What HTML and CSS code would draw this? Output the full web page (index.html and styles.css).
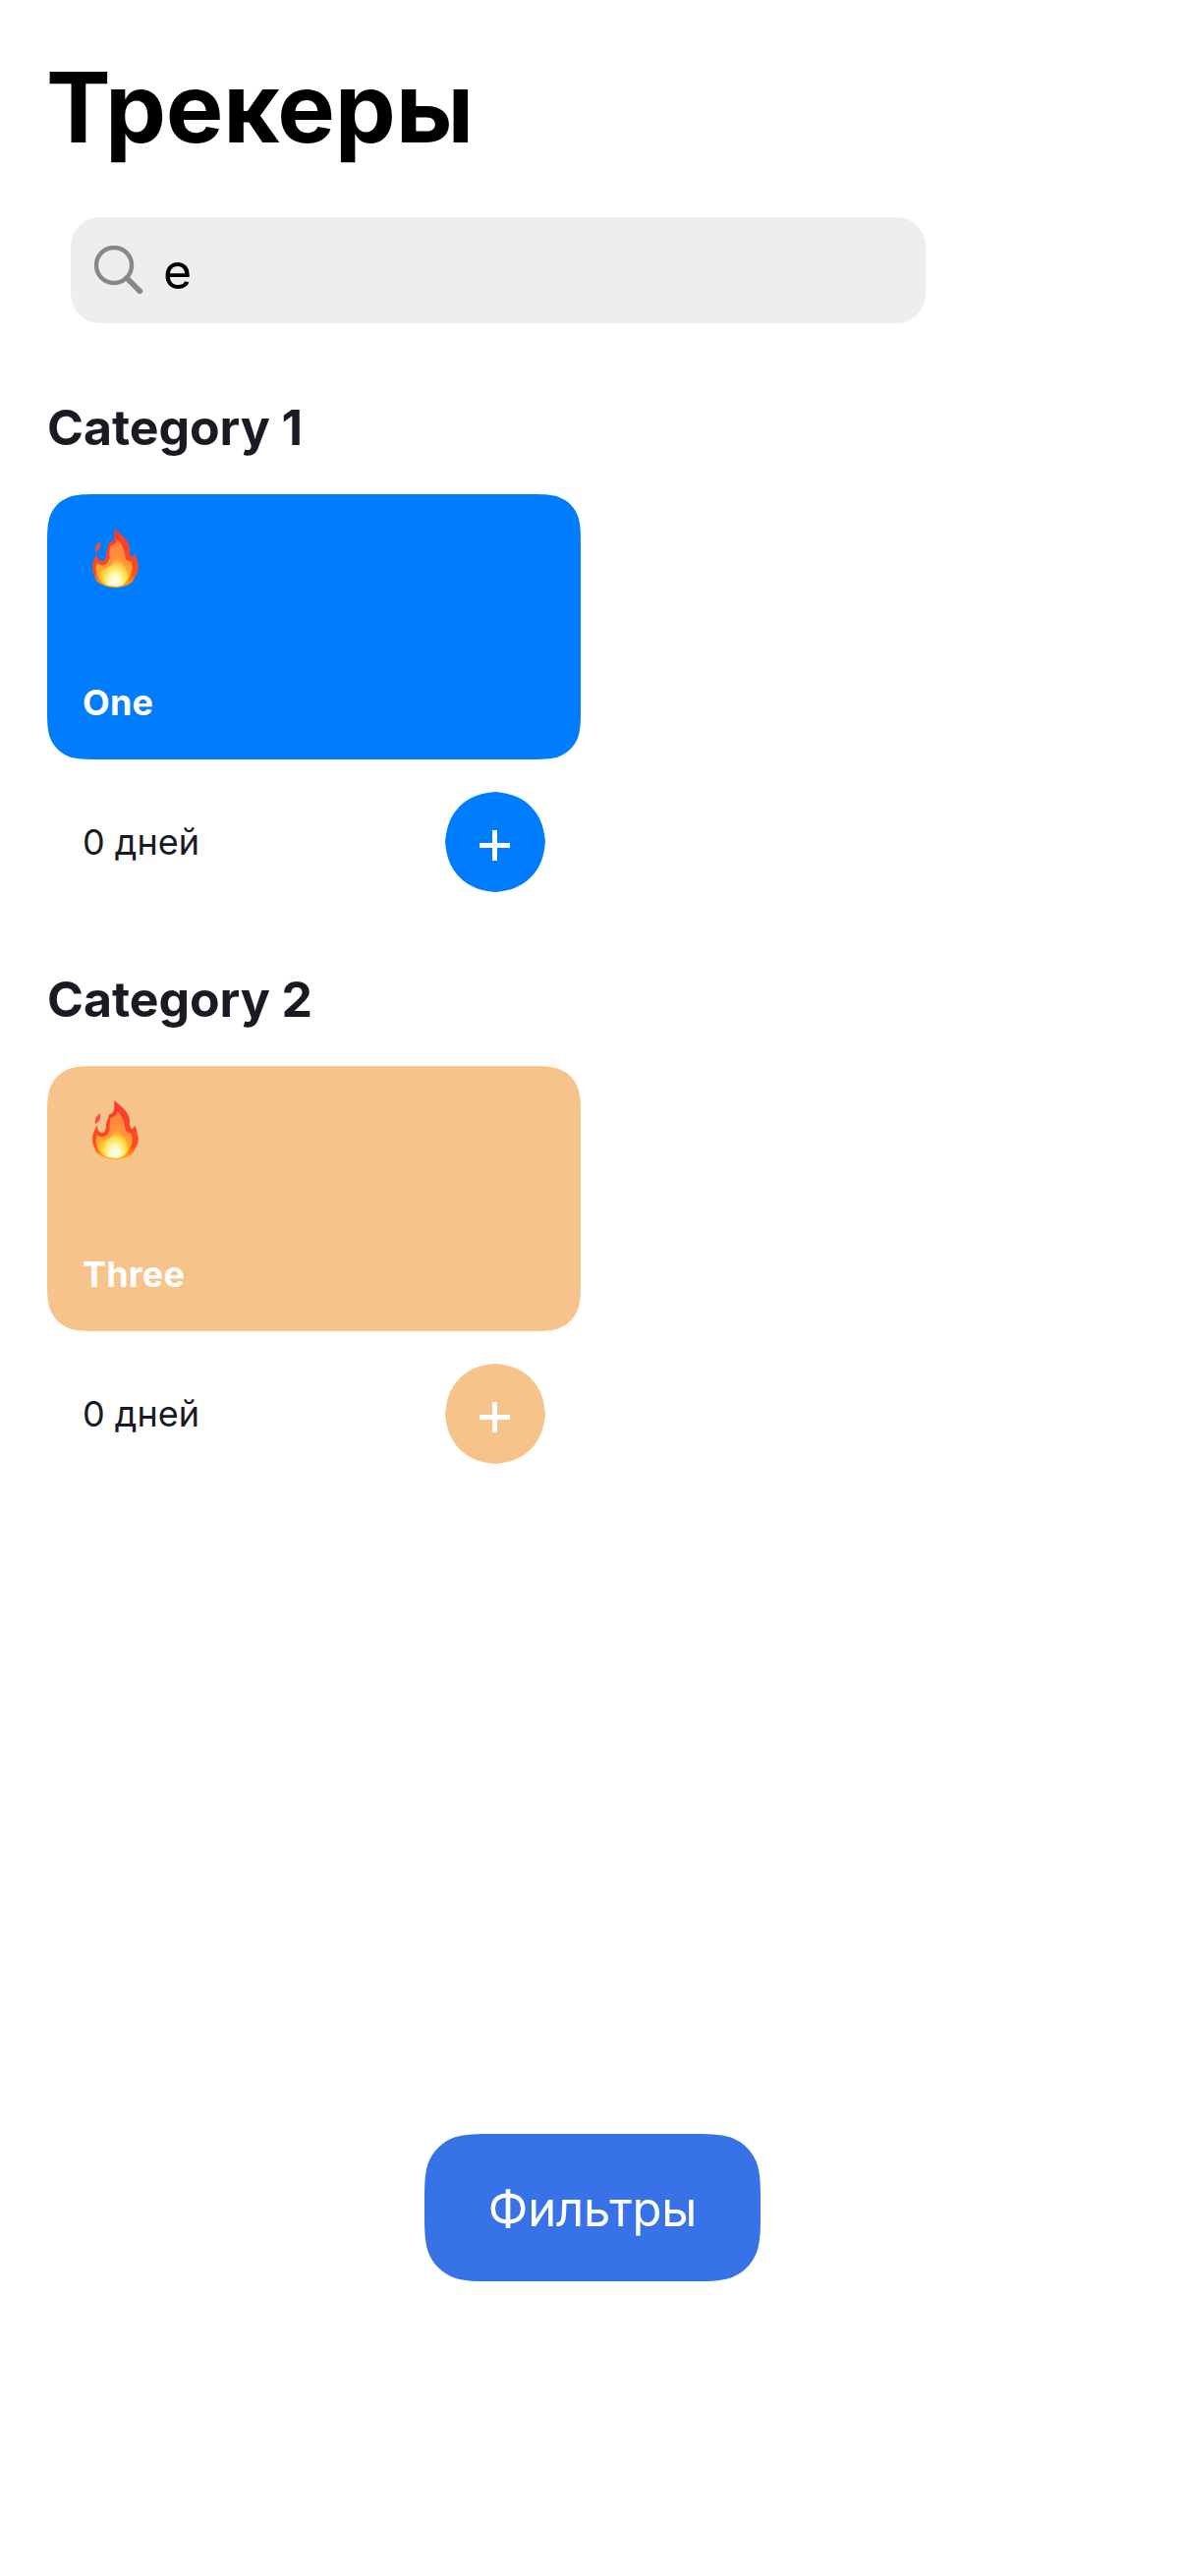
FILE: index.html
```html
<!DOCTYPE html>
<html lang="ru">
<head>
<meta charset="utf-8">
<title>Трекеры</title>
<link rel="stylesheet" href="styles.css">
</head>
<body>
<svg class="defs" width="0" height="0" aria-hidden="true">
  <defs>
    <linearGradient id="flame-outer" x1="0" y1="0" x2="0" y2="1">
      <stop offset="0" stop-color="#f93c2c"/>
      <stop offset=".5" stop-color="#fd4426"/>
      <stop offset=".78" stop-color="#ff4f12"/>
      <stop offset="1" stop-color="#ffb413"/>
    </linearGradient>
    <linearGradient id="flame-mid" x1="0" y1="0" x2="0" y2="1">
      <stop offset="0" stop-color="#ff7f45"/>
      <stop offset=".5" stop-color="#ff9438"/>
      <stop offset="1" stop-color="#ffc81c"/>
    </linearGradient>
    <radialGradient id="flame-core" gradientUnits="userSpaceOnUse" cx="23" cy="54" r="23" gradientTransform="translate(23 54) scale(.85 1.15) translate(-23 -54)">
      <stop offset="0" stop-color="#fffff4"/>
      <stop offset=".28" stop-color="#fffbc0"/>
      <stop offset=".6" stop-color="#ffe34a" stop-opacity=".9"/>
      <stop offset="1" stop-color="#ffb02c" stop-opacity="0"/>
    </radialGradient>
    <symbol id="flame" viewBox="0 0 48 60">
      <path fill="url(#flame-outer)" d="M22 0C27 4 34 9 37 16C39 21 37 25 39 28C41 30 43 28 43 25C45 28 45 32 46 35C48 40 46 46 43 50L41 54C36 58 29 60 23 60C16 60 8 57 4 53L3 50C0 45-1 37 2 31L5 25C5 29 6 32 9 33C13 34 14 29 14 25C15 19 17 17 17 14C22 14 23 9 22 0Z"/>
      <path fill="#ff4b38" d="M8 13C8 19 8 21 3 24C2 19 4 16 8 13Z"/>
      <path fill="url(#flame-mid)" d="M25 11C29 14 32 19 33 26C33 31 36 34 39 33C42 38 41 45 37 51C34 57 29 59 23 59C15 59 9 56 6 50C3 44 3 38 5 35C7 38 13 38 16 34C19 29 16 24 19 17C22 17 25 15 25 11Z"/>
      <path fill="url(#flame-core)" d="M25 27C27 33 31 34 34 40C38 46 37 52 31 57C26 60 18 59 12 56C5 50 6 45 9 41C16 42 21 36 25 27Z"/>
    </symbol>
    <symbol id="plus" viewBox="0 0 31 31">
      <path d="M15.5 0V31M0 15.5H31" stroke="#fff" stroke-width="5" fill="none"/>
    </symbol>
  </defs>
</svg>

<main class="screen">
  <h1 class="title">Трекеры</h1>

  <div class="search">
    <svg class="search-icon" viewBox="0 0 50 50" aria-hidden="true">
      <circle cx="20" cy="20" r="18"/>
      <path d="M33 33L46.3 46.3"/>
    </svg>
    <span class="search-text">e</span>
  </div>

  <section class="category">
    <h2 class="category-title">Category 1</h2>
    <article class="tracker tracker-blue">
      <div class="card">
        <svg class="emoji"><use href="#flame"/></svg>
        <span class="name">One</span>
      </div>
      <div class="footer">
        <span class="days">0 дней</span>
        <button class="add" aria-label="+"><svg class="plus"><use href="#plus"/></svg></button>
      </div>
    </article>
  </section>

  <section class="category">
    <h2 class="category-title">Category 2</h2>
    <article class="tracker tracker-sand">
      <div class="card">
        <svg class="emoji"><use href="#flame"/></svg>
        <span class="name">Three</span>
      </div>
      <div class="footer">
        <span class="days">0 дней</span>
        <button class="add" aria-label="+"><svg class="plus"><use href="#plus"/></svg></button>
      </div>
    </article>
  </section>

  <button class="filters"><span class="filters-label">Фильтры</span></button>
</main>
</body>
</html>
```

FILE: styles.css
```css
* { box-sizing: border-box; }

body {
  margin: 0;
  background: #fff;
  font-family: Inter, "Liberation Sans", sans-serif;
  color: #1a1b22;
}

.defs { position: absolute; }

.screen {
  width: 1206px;
  height: 2622px;
  display: flex;
  flex-direction: column;
  align-items: flex-start;
  padding: 49px 48px 300px;
}

h1, h2 { margin: 0; }

.title {
  height: 120px;
  margin-left: -1px;
  line-height: 121px;
  font-size: 98.5px;
  font-weight: 700;
  letter-spacing: -0.2px;
  color: #000;
}

.search {
  display: flex;
  align-items: center;
  width: 870px;
  height: 108px;
  margin: 52px 0 0 24px;
  padding: 0 24px;
  gap: 20px;
  border-radius: 30px;
  background: #eee;
}

.search-icon {
  width: 50px;
  height: 50px;
  fill: none;
  stroke: #87868b;
  stroke-width: 4.4;
  stroke-linecap: round;
}

.search-icon path { stroke-width: 5.6; }

.search-text {
  padding-top: 2px;
  font-size: 50px;
  line-height: 60px;
  color: #000;
}

.category { margin-top: 76px; }
.category + .category { margin-top: 79px; }

.category-title {
  height: 60px;
  line-height: 60px;
  font-size: 50px;
  font-weight: 700;
  letter-spacing: -0.05px;
}

.tracker {
  width: 543px;
  margin-top: 38px;
}

.tracker-blue { --tint: #007dff; }
.tracker-sand { --tint: #f6c48b; }

.card {
  display: flex;
  flex-direction: column;
  justify-content: space-between;
  height: 270px;
  padding: 35px 36px 33px;
  background: var(--tint);
  clip-path: path("M55 0H488C503.8 0 511.7 0 520.3 2.7C529.6 6.1 536.9 13.4 540.3 22.7C543 31.3 543 39.2 543 55V215C543 230.8 543 238.7 540.3 247.3C536.9 256.6 529.6 263.9 520.3 267.3C511.7 270 503.8 270 488 270H55C39.2 270 31.3 270 22.7 267.3C13.4 263.9 6.1 256.6 2.7 247.3C0 238.7 0 230.8 0 215V55C0 39.2 0 31.3 2.7 22.7C6.1 13.4 13.4 6.1 22.7 2.7C31.3 0 39.2 0 55 0Z");
}

.emoji {
  width: 48px;
  height: 60px;
  margin-left: 10px;
}

.name {
  color: #fff;
  font-size: 36px;
  line-height: 50px;
  font-weight: 700;
  letter-spacing: 0.2px;
}

.footer {
  display: flex;
  align-items: center;
  justify-content: space-between;
  height: 102px;
  margin-top: 33px;
  padding: 0 36px;
}

.days {
  font-size: 36px;
  line-height: 44px;
}

.add {
  display: flex;
  justify-content: center;
  width: 102px;
  height: 102px;
  padding: 39px 1px 0 0;
  border: 0;
  background: var(--tint);
  clip-path: path("M51 0C57.5 .7 63.5 1.5 69.8 3.8C83 8.6 93.4 19 98.2 32.2C100.5 38.5 101.3 44.5 102 51C101.3 57.5 100.5 63.5 98.2 69.8C93.4 83 83 93.4 69.8 98.2C63.5 100.5 57.5 101.3 51 102C44.5 101.3 38.5 100.5 32.2 98.2C19 93.4 8.6 83 3.8 69.8C1.5 63.5 .7 57.5 0 51C.7 44.5 1.5 38.5 3.8 32.2C8.6 19 19 8.6 32.2 3.8C38.5 1.5 44.5 .7 51 0Z");
}

.plus {
  width: 31px;
  height: 31px;
}

.filters {
  align-self: center;
  display: flex;
  align-items: center;
  justify-content: center;
  width: 342px;
  height: 150px;
  margin-top: auto;
  padding: 3px 0 0;
  border: 0;
  background: #3772e7;
  color: #fff;
  font: 400 49px/60px Inter, "Liberation Sans", sans-serif;
  letter-spacing: -0.2px;
  clip-path: path("M73.4 0H268.6C289.8 0 300.3 0 311.7 3.6C324.1 8.1 333.9 17.9 338.4 30.3C342 41.7 342 52.3 342 73.4V76.6C342 97.7 342 108.3 338.4 119.7C333.9 132.1 324.1 141.9 311.7 146.4C300.3 150 289.8 150 268.6 150H73.4C52.3 150 41.7 150 30.3 146.4C17.9 141.9 8.1 132.1 3.6 119.7C0 108.3 0 97.7 0 76.6V73.4C0 52.3 0 41.7 3.6 30.3C8.1 17.9 17.9 8.1 30.3 3.6C41.7 0 52.3 0 73.4 0Z");
}
```
